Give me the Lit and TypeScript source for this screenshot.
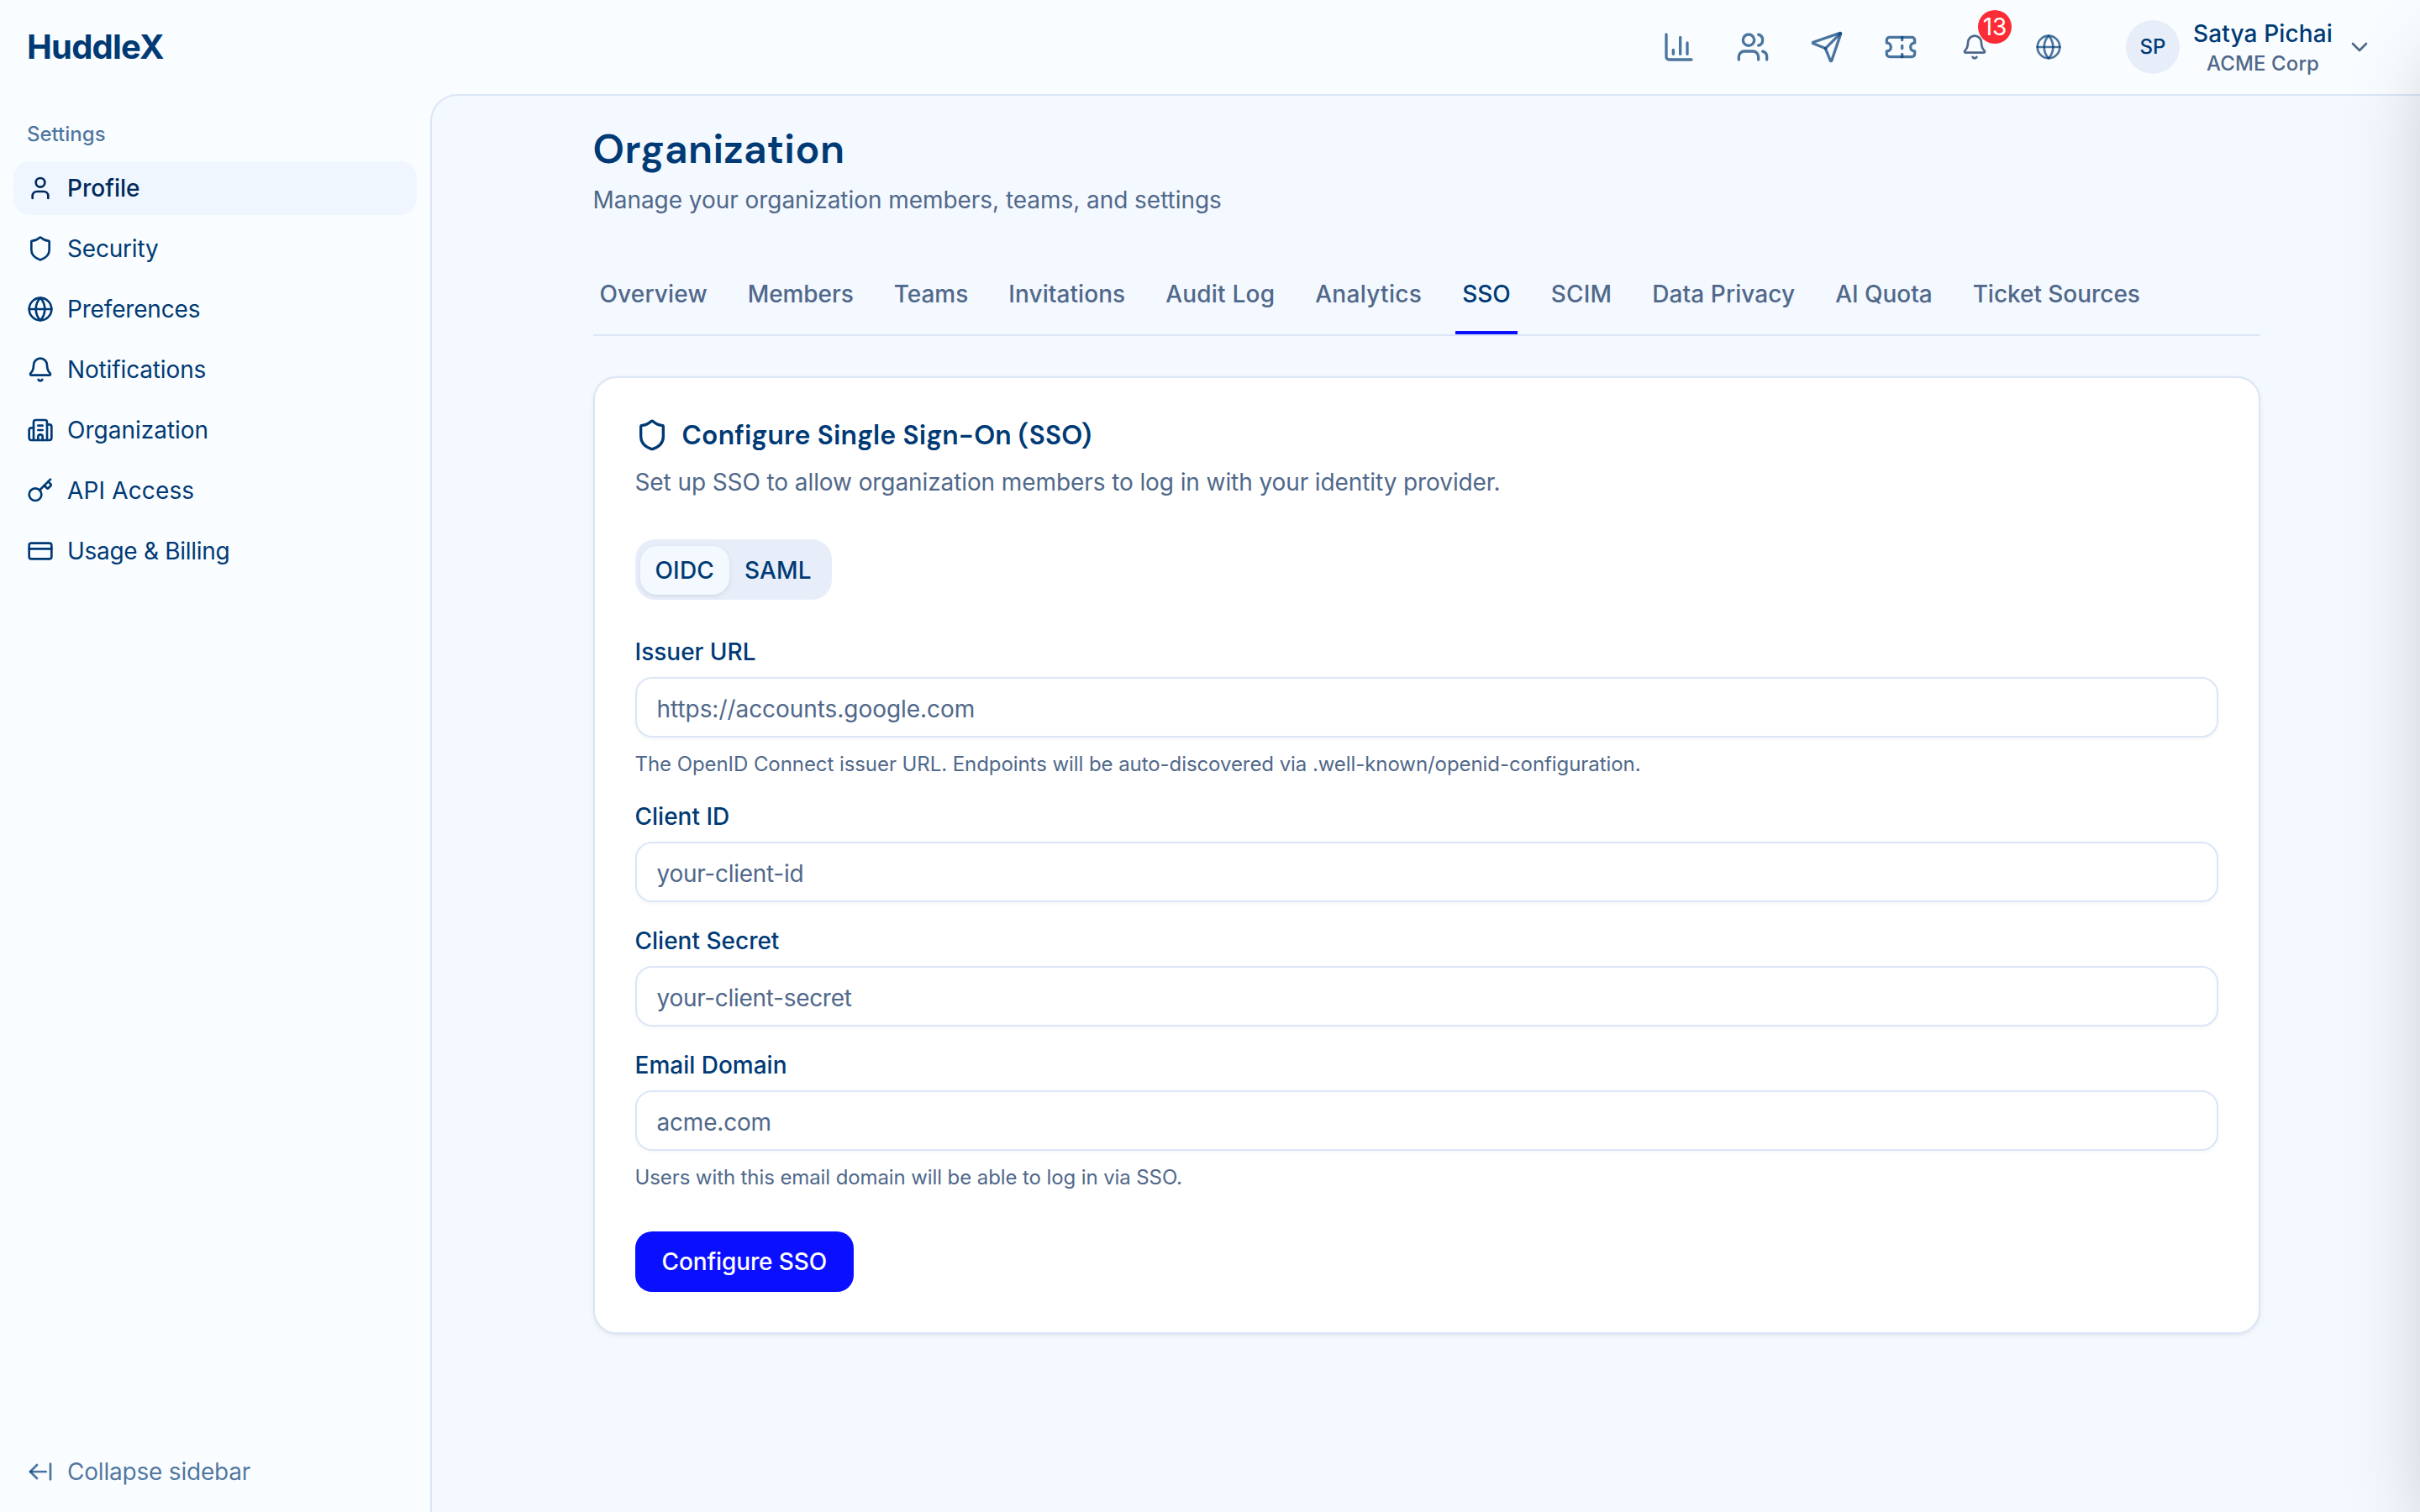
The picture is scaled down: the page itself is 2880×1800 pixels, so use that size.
import { LitElement, html, css, svg, type SVGTemplateResult } from "lit";
import { customElement, property } from "lit/decorators.js";
import { classMap } from "lit/directives/class-map.js";
import { styleMap } from "lit/directives/style-map.js";

const ICONS: Record<string, SVGTemplateResult> = {
  user: svg`<path d="M19 21v-2a4 4 0 0 0-4-4H9a4 4 0 0 0-4 4v2"/><circle cx="12" cy="7" r="4"/>`,
  shield: svg`<path d="M20 13c0 5-3.5 7.5-7.66 8.95a1 1 0 0 1-.67-.01C7.5 20.5 4 18 4 13V6a1 1 0 0 1 1-1c2 0 4.5-1.2 6.24-2.72a1.17 1.17 0 0 1 1.52 0C14.51 3.81 17 5 19 5a1 1 0 0 1 1 1z"/>`,
  globe: svg`<circle cx="12" cy="12" r="10"/><path d="M12 2a14.5 14.5 0 0 0 0 20 14.5 14.5 0 0 0 0-20"/><path d="M2 12h20"/>`,
  bell: svg`<path d="M10.268 21a2 2 0 0 0 3.464 0"/><path d="M3.262 15.326A1 1 0 0 0 4 17h16a1 1 0 0 0 .74-1.673C19.41 13.956 18 12.499 18 8A6 6 0 0 0 6 8c0 4.499-1.411 5.956-2.738 7.326"/>`,
  building: svg`<path d="M10 12h4"/><path d="M10 8h4"/><path d="M14 21v-3a2 2 0 0 0-4 0v3"/><path d="M6 10H4a2 2 0 0 0-2 2v7a2 2 0 0 0 2 2h16a2 2 0 0 0 2-2V9a2 2 0 0 0-2-2h-2"/><path d="M6 21V5a2 2 0 0 1 2-2h8a2 2 0 0 1 2 2v16"/>`,
  key: svg`<path d="m15.5 7.5 2.3 2.3a1 1 0 0 0 1.4 0l2.1-2.1a1 1 0 0 0 0-1.4L19 4"/><path d="m21 2-9.6 9.6"/><circle cx="7.5" cy="15.5" r="5.5"/>`,
  card: svg`<rect width="20" height="14" x="2" y="5" rx="2"/><path d="M2 10h20"/>`,
  collapse: svg`<path d="m9 6-6 6 6 6"/><path d="M3 12h14"/><path d="M21 19V5"/>`,
  chart: svg`<path d="M3 3v16a2 2 0 0 0 2 2h16"/><path d="M18 17V9"/><path d="M13 17V5"/><path d="M8 17v-3"/>`,
  users: svg`<path d="M16 21v-2a4 4 0 0 0-4-4H6a4 4 0 0 0-4 4v2"/><path d="M16 3.128a4 4 0 0 1 0 7.744"/><path d="M22 21v-2a4 4 0 0 0-3-3.87"/><circle cx="9" cy="7" r="4"/>`,
  send: svg`<path d="M14.536 21.686a.5.5 0 0 0 .937-.024l6.5-19a.496.496 0 0 0-.635-.635l-19 6.5a.5.5 0 0 0-.024.937l7.93 3.18a2 2 0 0 1 1.112 1.11z"/><path d="m21.854 2.147-10.94 10.939"/>`,
  ticket: svg`<path d="M2 9a3 3 0 0 1 0 6v2a2 2 0 0 0 2 2h16a2 2 0 0 0 2-2v-2a3 3 0 0 1 0-6V7a2 2 0 0 0-2-2H4a2 2 0 0 0-2 2Z"/><path d="M13 5v2"/><path d="M13 17v2"/><path d="M13 11v2"/>`,
  chevron: svg`<path d="m6 9 6 6 6-6"/>`,
};

@customElement("ui-icon")
export class UiIcon extends LitElement {
  @property() name = "user";
  @property({ type: Boolean, reflect: true }) large = false;

  static styles = css`
    :host { display: block; flex: none; width: 32px; height: 32px; }
    :host([large]) { width: 40px; height: 40px; }
    .glyph {
      display: block; width: 100%; height: 100%;
      fill: none; stroke: currentColor; stroke-width: 2;
      stroke-linecap: round; stroke-linejoin: round;
    }
  `;

  render() {
    return html`<svg class="glyph" viewBox="0 0 24 24">${ICONS[this.name]}</svg>`;
  }
}

// `tracking` is the letter spacing of a label in px.
interface Label { label: string; tracking: number; }

const NAV: (Label & { icon: string; active?: boolean })[] = [
  { icon: "user", label: "Profile", tracking: 0, active: true },
  { icon: "shield", label: "Security", tracking: -0.2 },
  { icon: "globe", label: "Preferences", tracking: -0.17 },
  { icon: "bell", label: "Notifications", tracking: -0.14 },
  { icon: "building", label: "Organization", tracking: 0 },
  { icon: "key", label: "API Access", tracking: 0.15 },
  { icon: "card", label: "Usage & Billing", tracking: -0.3 },
];

const TABS: Label[] = [
  { label: "Overview", tracking: 0.15 },
  { label: "Members", tracking: -0.1 },
  { label: "Teams", tracking: 0 },
  { label: "Invitations", tracking: 0.07 },
  { label: "Audit Log", tracking: 0.2 },
  { label: "Analytics", tracking: 0.3 },
  { label: "SSO", tracking: 0 },
  { label: "SCIM", tracking: 0.18 },
  { label: "Data Privacy", tracking: 0.08 },
  { label: "AI Quota", tracking: -0.04 },
  { label: "Ticket Sources", tracking: -0.04 },
];

const FIELDS = [
  { label: "Issuer URL", placeholder: "https://accounts.google.com", tracking: -0.05,
    hint: "The OpenID Connect issuer URL. Endpoints will be auto-discovered via .well-known/openid-configuration.", hintTracking: -0.07 },
  { label: "Client ID", placeholder: "your-client-id", tracking: -0.28 },
  { label: "Client Secret", placeholder: "your-client-secret", tracking: -0.3 },
  { label: "Email Domain", placeholder: "acme.com", tracking: -0.2,
    hint: "Users with this email domain will be able to log in via SSO.", hintTracking: -0.1 },
];

const tracked = (px = 0) => styleMap({ letterSpacing: `${px}px` });

@customElement("app-root")
export class AppRoot extends LitElement {
  static styles = css`
    :host {
      --ink: #003a75;
      --ink-soft: rgba(0, 58, 117, 0.7);
      --muted: #50688a;
      --line: #dbe6f6;
      --surface: #fafdff;
      --canvas: #f4f8ff;
      --wash: #e7eefa;
      position: relative;
      display: grid;
      grid-template: 112px 1fr / 512px 1fr;
      width: 2880px; height: 1800px;
      overflow: hidden;
      background: var(--surface);
      color: var(--ink);
      font: 400 28px/40px Inter, "Liberation Sans", sans-serif;
    }
    * { box-sizing: border-box; }
    button { margin: 0; border: 0; padding: 0; background: none; color: inherit; font: inherit; text-align: left; }

    .brand { display: flex; align-items: center; padding-left: 32px; font-size: 40px; font-weight: 700; letter-spacing: -0.8px; }
    .topbar { display: flex; align-items: center; justify-content: flex-end; padding-right: 56px; }
    .tools { display: flex; gap: 48px; color: var(--ink-soft); margin-right: 72px; }
    .tool { position: relative; display: grid; place-items: center; width: 40px; height: 40px; }
    .tool.bell { color: var(--muted); }
    .badge {
      position: absolute; left: 24px; top: -24px; width: 40px; height: 40px; border-radius: 50%;
      background: #fb2c36; color: #fff; font-size: 28px; line-height: 40px; text-align: center;
    }
    .account { display: flex; align-items: center; gap: 16px; }
    .avatar { display: grid; place-items: center; width: 64px; height: 64px; border-radius: 50%; background: var(--wash); font-size: 24px; font-weight: 500; }
    .who { display: flex; flex-direction: column; align-items: center; width: 166px; font-weight: 500; letter-spacing: 0.12px; white-space: nowrap; }
    .org { font-size: 24px; line-height: 32px; color: var(--muted); }
    .account ui-icon { color: var(--muted); }

    .sidebar { display: flex; flex-direction: column; padding: 16px; }
    .group { height: 64px; padding: 0 16px; line-height: 64px; font-size: 24px; font-weight: 500; color: var(--ink-soft); }
    .nav { display: flex; flex-direction: column; gap: 8px; flex: 1; }
    .item { display: flex; align-items: center; gap: 16px; height: 64px; padding: 0 16px; border-radius: 20px; }
    .item.active { background: #eff6ff; color: #002a5c; font-weight: 500; }
    .item.quiet { color: var(--ink-soft); letter-spacing: -0.2px; }

    .main {
      border: solid var(--line); border-width: 2px 0 0 2px; border-top-left-radius: 32px;
      background: var(--canvas); padding: 32px 190.5px 0 191.5px;
    }
    .title { margin: 0 0 8px; font: 600 48px/64px "DM Sans", Inter, sans-serif; letter-spacing: 0.46px; }
    .lead { margin: 0 0 48px; color: var(--muted); letter-spacing: -0.05px; }
    .tabs { display: flex; gap: 32px; border-bottom: 2px solid var(--line); }
    .tab { padding: 24px 8px; border-bottom: 4px solid transparent; color: var(--muted); font-weight: 500; white-space: nowrap; }
    .tab.active { color: var(--ink); border-bottom-color: #0a0fff; }

    .card {
      margin-top: 48px; padding: 48px; border: 2px solid var(--line); border-radius: 28px; background: #fff;
      box-shadow: 0 2px 6px rgba(0, 0, 0, 0.06), 0 2px 4px -2px rgba(0, 0, 0, 0.06);
    }
    .card-head { display: flex; align-items: center; gap: 16px; margin: 0 0 16px; font: 600 32px/40px "DM Sans", Inter, sans-serif; letter-spacing: 0.19px; }
    .card-lead { margin: 0 0 48px; color: var(--muted); letter-spacing: -0.094px; }
    .switch { display: flex; width: fit-content; height: 72px; padding: 8px 6px 6px; border-radius: 24px; background: var(--wash); }
    .choice { height: 58px; padding: 0 18px; border-radius: 20px; font-weight: 500; letter-spacing: 0.15px; }
    .choice.active { background: var(--canvas); box-shadow: 0 2px 6px rgba(0, 0, 0, 0.07), 0 2px 4px -2px rgba(0, 0, 0, 0.06); }

    .form { display: flex; flex-direction: column; gap: 32px; margin: 48px 0; }
    .field { display: flex; flex-direction: column; gap: 16px; }
    .label { font-weight: 500; line-height: 28px; }
    .input {
      width: 100%; height: 72px; padding: 4px 24px 0; border: 2px solid var(--line); border-radius: 20px; background: #fff;
      font: inherit; color: var(--ink); outline: none;
      box-shadow: 0 2px 4px rgba(0, 0, 0, 0.04);
    }
    .input::placeholder { color: var(--muted); opacity: 1; }
    .hint { font-size: 24px; line-height: 32px; color: var(--muted); }
    .submit { display: block; height: 72px; padding: 0 32px; border-radius: 20px; background: #0a0fff; color: #fff; font-weight: 500; letter-spacing: -0.12px; }

    .drawer-edge {
      position: absolute; left: 100%; top: 0; width: 768px; height: 100%;
      box-shadow: 0 50px 100px -24px rgba(0, 0, 0, 0.25);
    }
  `;

  render() {
    return html`
      <div class="brand">HuddleX</div>
      <header class="topbar">
        <div class="tools">
          ${["chart", "users", "send", "ticket"].map((n) => html`<span class="tool"><ui-icon large name=${n}></ui-icon></span>`)}
          <span class="tool bell"><ui-icon name="bell"></ui-icon><span class="badge">13</span></span>
          <span class="tool"><ui-icon name="globe"></ui-icon></span>
        </div>
        <div class="account">
          <span class="avatar">SP</span>
          <span class="who"><span>Satya Pichai</span><span class="org">ACME Corp</span></span>
          <ui-icon name="chevron"></ui-icon>
        </div>
      </header>

      <aside class="sidebar">
        <div class="group">Settings</div>
        <nav class="nav">
          ${NAV.map((n) => html`
            <div class=${classMap({ item: true, active: !!n.active })}>
              <ui-icon name=${n.icon}></ui-icon><span style=${tracked(n.tracking)}>${n.label}</span>
            </div>`)}
        </nav>
        <div class="item quiet"><ui-icon name="collapse"></ui-icon><span>Collapse sidebar</span></div>
      </aside>

      <main class="main">
        <h1 class="title">Organization</h1>
        <p class="lead">Manage your organization members, teams, and settings</p>
        <div class="tabs">
          ${TABS.map((t) => html`<div class=${classMap({ tab: true, active: t.label === "SSO" })} style=${tracked(t.tracking)}>${t.label}</div>`)}
        </div>
        <section class="card">
          <h2 class="card-head"><ui-icon large name="shield"></ui-icon><span>Configure Single Sign-On (SSO)</span></h2>
          <p class="card-lead">Set up SSO to allow organization members to log in with your identity provider.</p>
          <div class="switch">
            <button class="choice active">OIDC</button><button class="choice">SAML</button>
          </div>
          <div class="form">
            ${FIELDS.map((f) => html`
              <div class="field">
                <label class="label">${f.label}</label>
                <input class="input" placeholder=${f.placeholder} style=${tracked(f.tracking)} />
                ${f.hint ? html`<div class="hint" style=${tracked(f.hintTracking)}>${f.hint}</div>` : null}
              </div>`)}
          </div>
          <button class="submit">Configure SSO</button>
        </section>
      </main>
      <div class="drawer-edge"></div>
    `;
  }
}
